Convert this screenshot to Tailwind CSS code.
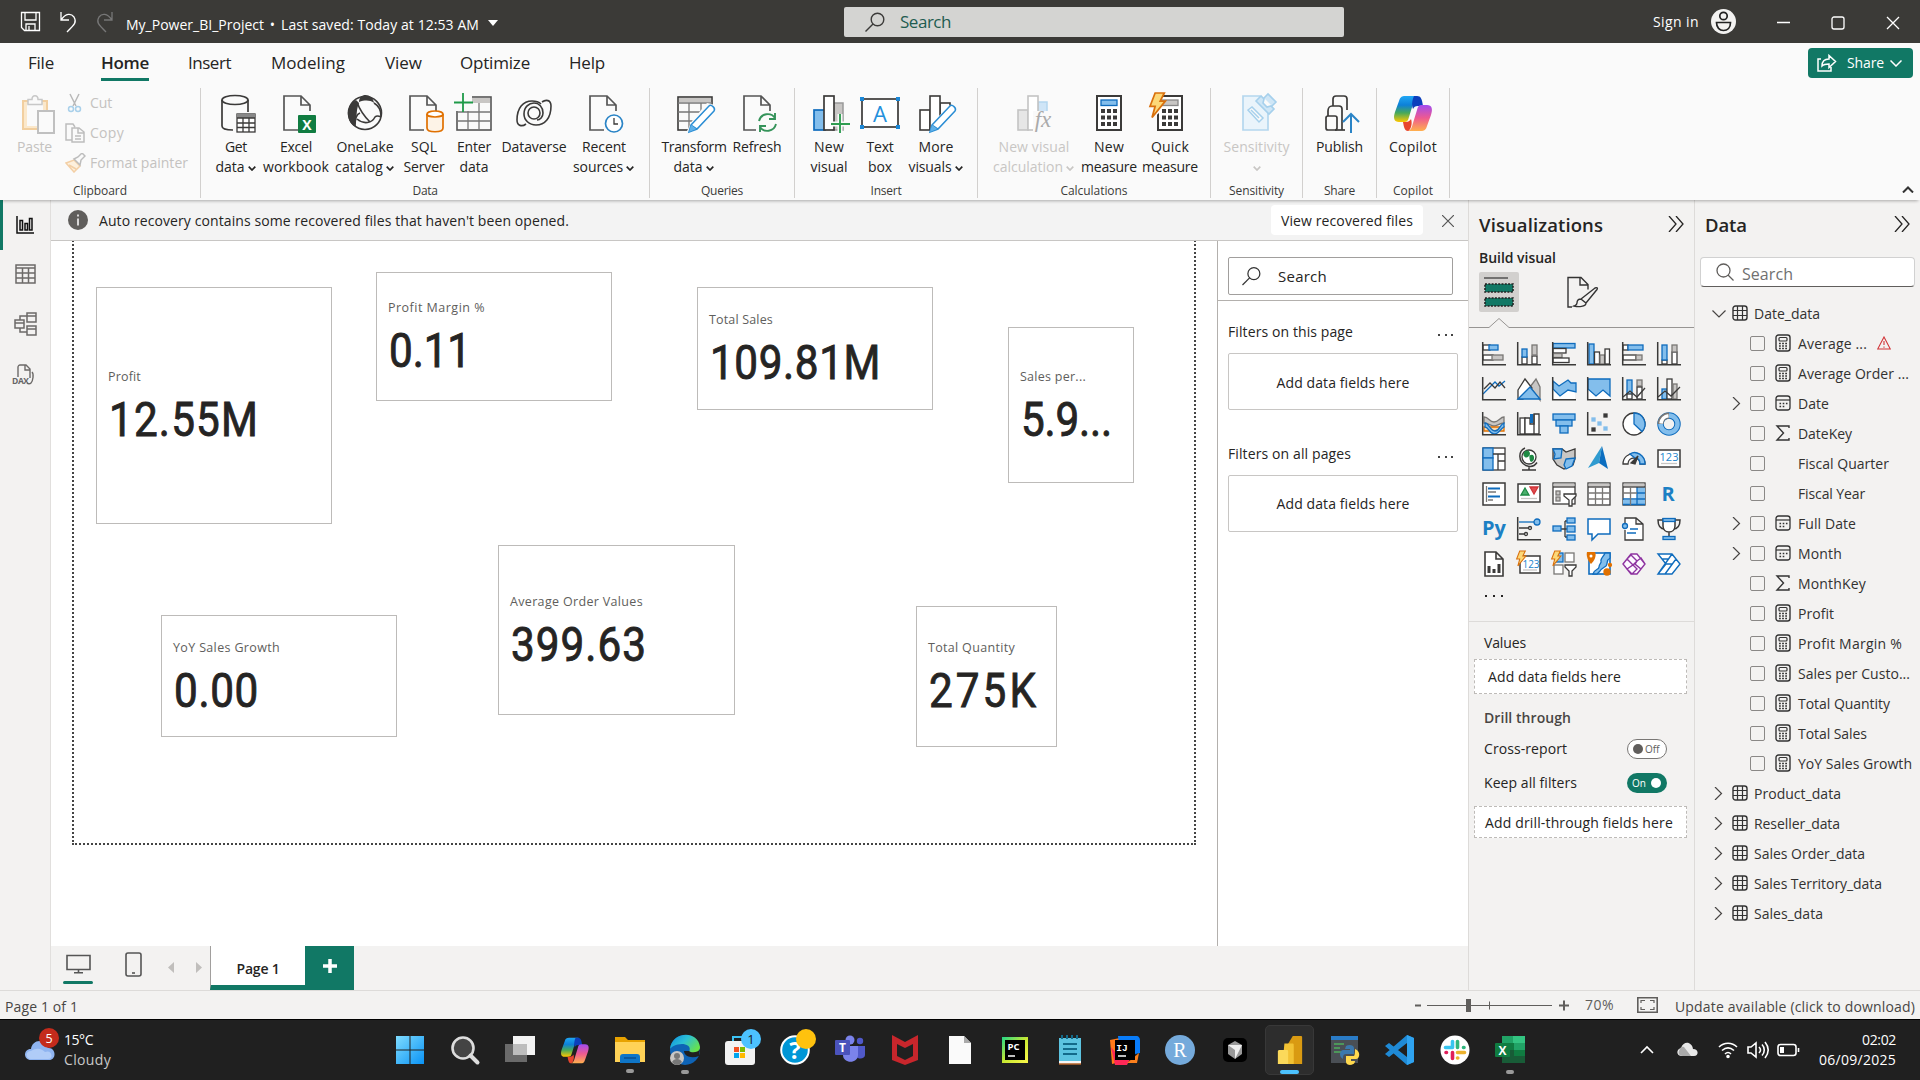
<!DOCTYPE html>
<html lang="en">
<head>
<meta charset="utf-8">
<title>My_Power_BI_Project</title>
<script src="https://cdn.jsdelivr.net/npm/@tailwindcss/browser@4"></script>
</head>
<body class="w-[1920px] h-[1080px] overflow-hidden flex flex-col bg-[#f3f2f1] font-['Open_Sans',sans-serif] text-[14px] leading-[20px] text-[#252423] whitespace-nowrap">

<!-- title bar -->
<header class="h-[43px] shrink-0 bg-[#3b3a37] flex items-center text-white">
  <svg class="ml-[20px] w-[94px] h-[22px] shrink-0" viewBox="0 0 94 22" fill="none" stroke="#fff" stroke-width="1.3">
    <path d="M1.5 1.5h18v18h-15l-3-3zM5 1.500v7.500h11v-7.500M6 19.500v-6.500h9v6.500M9 15v4.500"/>
    <path d="M41 1v8h8M41 9c5-7 10-7 13-3 3 5 1 7-7 15"/>
    <path stroke="#777" d="M92 1v8h-8M92 9c-5-7-10-7-13-3-3 5-1 7 7 15"/>
  </svg>
  <div class="ml-[12px] mt-[6px] w-[373px] flex items-center">
    <span data-w="138">My_Power_BI_Project</span><span class="w-[17px] text-center">•</span><span data-w="198">Last saved: Today at 12:53 AM</span>
    <svg class="ml-[9px] w-[10px] h-[6px] -mt-1 shrink-0" viewBox="0 0 10 6"><path fill="#fff" d="M0 0h10l-5 6z"/></svg>
  </div>
  <div class="ml-[345px] w-[500px] h-[30px] rounded-[2px] bg-[#d4d4d2] flex items-center shrink-0">
    <svg class="ml-[21px] w-[20px] h-[20px]" viewBox="0 0 20 20" fill="none" stroke="#3b3a39" stroke-width="1.4"><circle cx="12.500" cy="7.500" r="6.300"/><path d="M8 12l-7.500 7.500"/></svg>
    <span class="ml-[15px] text-[17px] text-[#1f5c50]" data-w="51">Search</span>
  </div>
  <span class="ml-[309px]" data-w="46">Sign in</span>
  <svg class="ml-[12px] w-[25px] h-[25px] shrink-0" viewBox="0 0 25 25"><circle cx="12.500" cy="12.500" r="12.500" fill="#f3f2f1"/><g fill="none" stroke="#222" stroke-width="1.700"><circle cx="12.500" cy="7" r="3.700"/><path d="M5.500 13.500h14c0 5-3 8-7 8s-7-3-7-8z"/></g></svg>
  <svg class="ml-[40px] mt-[3px] w-[126px] h-[16px] shrink-0" viewBox="0 0 126 16" fill="none" stroke="#fff" stroke-width="1.300"><path d="M1 7.500h13M111 2l12 12M123 2l-12 12"/><rect x="56" y="2" width="12" height="12" rx="2"/></svg>
</header>

<!-- menu tabs -->
<nav class="h-[45px] shrink-0 bg-[#fafafa] flex text-[17px] leading-[39px] relative">
  <span class="ml-[28px] w-[73px]"><span data-w="26">File</span></span>
  <span class="w-[87px] font-semibold"><span data-w="48" class="h-[38px] border-b-[3px] border-[#117865]">Home</span></span>
  <span class="w-[83px]"><span data-w="43">Insert</span></span>
  <span class="w-[114px]"><span data-w="74">Modeling</span></span>
  <span class="w-[75px]"><span data-w="37">View</span></span>
  <span class="w-[109px]"><span data-w="70">Optimize</span></span>
  <span class="w-[60px]"><span data-w="36">Help</span></span>
  <div class="ml-auto mr-[7px] mt-[5px] w-[105px] h-[30px] rounded-[4px] bg-[#117865] flex items-center text-white text-[14px] leading-[20px]">
    <svg class="ml-[9px] w-[20px] h-[18px]" viewBox="0 0 20 18" fill="none" stroke="#fff" stroke-width="1.500"><path d="M4 5H1v12h13v-4M5 12c0-5 3-7 7-7V1.500l6.500 6-6.500 6V10c-3 0-5 0-7 2z"/></svg>
    <span class="ml-[10px]" data-w="37">Share</span>
    <svg class="ml-[6px] w-[12px] h-[7px]" viewBox="0 0 12 7" fill="none" stroke="#fff" stroke-width="1.500"><path d="M.5.5L6 6l5.500-5.500"/></svg>
  </div>
</nav>

<!-- ribbon -->
<section class="h-[112px] shrink-0 bg-[#fafafa] flex relative z-10 shadow-[0_3px_3px_-2px_rgba(0,0,0,0.3)]">
  <div class="w-[201px] h-[110px] border-r border-[#d2d0ce] flex flex-col">
    <div class="flex h-[94px] shrink-0 text-[#c4c2c0]">
      <div class="w-[65px] flex flex-col">
        <svg class="ml-[20px] mt-[6px] w-[38px] h-[40px]" viewBox="0 0 38 40"><path d="M3 7h24v28H3z" fill="#fbe8cb" stroke="#f2cf9f" stroke-width="2"/><path d="M7 10h16v22H7z" fill="#fafafa"/><path d="M8 5.500h4c0-5 6-5 6 0h4v5H8z" fill="#fafafa" stroke="#c8c8c8" stroke-width="1.500"/><path d="M18 17h16v22H18z" fill="#fafafa" stroke="#c0c0c0" stroke-width="2"/></svg>
        <span class="ml-[17px] mt-[3px]"><span data-w="35">Paste</span></span>
      </div>
      <div class="flex flex-col">
        <div class="flex h-[30px] items-center"><svg class="w-[20px] h-[20px]" viewBox="0 0 20 20" fill="none" stroke-width="1.500"><path d="M5 1l6 12M14 1L8 13" stroke="#b9b9b9"/><circle cx="6" cy="16" r="2.500" stroke="#a9d0ea"/><circle cx="13" cy="16" r="2.500" stroke="#a9d0ea"/></svg><span class="ml-[5px]" data-w="22">Cut</span></div>
        <div class="flex h-[30px] items-center"><svg class="w-[20px] h-[20px]" viewBox="0 0 20 20" fill="none" stroke="#bdbdbd" stroke-width="1.500"><path d="M7 17H1V1h7l2 3M7 5h7l5 4v10H7zM13 5v5h6M10 13h6M10 16h6"/></svg><span class="ml-[5px]" data-w="34">Copy</span></div>
        <div class="flex h-[30px] items-center"><svg class="w-[21px] h-[20px]" viewBox="0 0 21 20" fill="none" stroke-width="1.500"><path d="M1 10l8-3 6 6-6 6zM4 12l7 4" stroke="#f3cfa5" fill="#fdf0dd"/><path d="M9 6l4-2 4-4 3 3-4 4-1 5z" stroke="#bdbdbd" fill="#fafafa"/></svg><span class="ml-[4px]" data-w="98">Format painter</span></div>
      </div>
    </div>
    <span class="text-center text-[12px] leading-[18px] text-[#3b3a39]"><span data-w="54">Clipboard</span></span>
  </div>
  <div id="ribbon" class="flex"></div>
  <svg class="ml-auto mr-[6px] mt-[98px] w-[12px] h-[7px]" viewBox="0 0 12 7" fill="none" stroke="#333" stroke-width="2"><path d="M1 6.500l5-5 5 5"/></svg>
</section>

<main class="flex h-[790px] shrink-0">
  <!-- view switcher -->
  <aside class="w-[51px] border-r border-[#e1dfdd] flex flex-col">
    <div class="h-[50px] border-l-[3px] border-[#117865] flex items-center"><svg class="ml-[13px] w-[18px] h-[18px]" viewBox="0 0 18 18" fill="none" stroke="#111" stroke-width="1.500"><path d="M1 0v17h17M4 4.500h2.500v9.500H4zM9 7.500h2.500v6.500H9zM13.500 2.500H16v11.500h-2.500z"/></svg></div>
    <div class="h-[48px] flex items-center"><svg class="ml-[15px] w-[21px] h-[20px]" viewBox="0 0 21 20" fill="none" stroke="#6c6a68" stroke-width="1.500"><path d="M1 1h19v18H1zM1 4h19M1 9h19M1 14h19M7.500 4v15M13.500 4v15"/></svg></div>
    <div class="h-[52px] flex items-center"><svg class="ml-[14px] w-[23px] h-[24px]" viewBox="0 0 23 24" fill="none" stroke="#6c6a68" stroke-width="1.500"><path d="M1 8h9v8H1zM1 11h9M13 1h9v9h-9zM13 4h9M13 14h9v9h-9zM13 17h9M6 8V4h7M6 16v4h7"/></svg></div>
    <div class="h-[50px] flex items-center"><svg class="ml-[12px] w-[24px] h-[22px]" viewBox="0 0 24 22" fill="none" stroke="#6c6a68" stroke-width="1.400"><path d="M6 13V3c0-1 1-2 2-2h6l4 4v9M13 1v5h5M20 8c2 2 1 9-1 11-1 1-3 1-4 0"/><text x="0" y="20" font-size="8.500" font-weight="700" fill="#666" stroke="none" textLength="17">DAX</text></svg></div>
  </aside>

  <div class="w-[1417px] flex flex-col">
    <!-- recovery notice -->
    <div class="h-[41px] shrink-0 bg-[#f3f3f3] border-b border-[#c8c6c4] flex items-center">
      <svg class="ml-[17px] w-[20px] h-[20px]" viewBox="0 0 20 20"><circle cx="10" cy="10" r="10" fill="#605e5c"/><path d="M10 4.500v2M10 8.500v7" stroke="#fff" stroke-width="1.500"/></svg>
      <span class="ml-[11px] mt-px" data-w="470">Auto recovery contains some recovered files that haven't been opened.</span>
      <span class="ml-auto w-[152px] h-[30px] leading-[31px] rounded-[4px] bg-white text-center"><span data-w="132">View recovered files</span></span>
      <svg class="ml-[19px] mr-[14px] w-[12px] h-[12px] mt-[2px]" viewBox="0 0 12 12" stroke="#555" stroke-width="1.200"><path d="M0 0l12 12M12 0L0 12"/></svg>
    </div>
    <div class="flex h-[705px] bg-white">
      <!-- report canvas -->
      <div id="canvas" class="relative w-[1166px] overflow-hidden">
        <div class="absolute left-[21px] -top-[4px] w-[1124px] h-[608px] border-2 border-dotted border-[#444]"></div>
      </div>
      <!-- filters -->
      <div class="w-[251px] border-l border-[#b3b0ad] flex flex-col">
        <div class="h-[60px] border-b border-[#b3b0ad] pt-[16px] pl-[10px]">
          <div class="w-[225px] h-[38px] border border-[#a19f9d] rounded-[2px] flex items-center">
            <svg class="ml-[13px] w-[19px] h-[20px]" viewBox="0 0 20 20" fill="none" stroke="#333" stroke-width="1.300"><circle cx="12.500" cy="7.500" r="6.300"/><path d="M8 12L.5 19.500"/></svg>
            <span class="ml-[17px] text-[15px]" data-w="49">Search</span>
          </div>
        </div>
        <div class="ml-[10px] mt-[21px] w-[230px] flex justify-between items-center"><span data-w="125">Filters on this page</span><svg class="mr-[4px] mt-[5px] w-[16px] h-[2px]" viewBox="0 0 16 2" fill="#444"><path d="M0 0h2v2H0zM7 0h2v2H7zM13 0h2v2h-2z"/></svg></div>
        <div class="ml-[10px] mt-[11px] w-[230px] h-[57px] border border-[#c8c6c4] rounded-[2px] flex items-center justify-center pt-[3px]"><span data-w="133">Add data fields here</span></div>
        <div class="ml-[10px] mt-[34px] w-[230px] flex justify-between items-center"><span data-w="123">Filters on all pages</span><svg class="mr-[4px] mt-[5px] w-[16px] h-[2px]" viewBox="0 0 16 2" fill="#444"><path d="M0 0h2v2H0zM7 0h2v2H7zM13 0h2v2h-2z"/></svg></div>
        <div class="ml-[10px] mt-[11px] w-[230px] h-[57px] border border-[#c8c6c4] rounded-[2px] flex items-center justify-center"><span data-w="133">Add data fields here</span></div>
      </div>
    </div>
    <!-- page tabs -->
    <div class="h-[44px] flex">
      <div class="ml-[12px] w-[30px] flex flex-col items-center">
        <svg class="mt-[8px] w-[25px] h-[20px]" viewBox="0 0 25 20" fill="none" stroke="#555" stroke-width="1.600"><path d="M1 1.500h23v14H1zM12.500 15.500v3M8 18.700h9"/></svg>
        <div class="mt-[7px] w-[30px] h-[3px] rounded bg-[#117865]"></div>
      </div>
      <svg class="ml-[32px] mt-[6px] w-[17px] h-[25px]" viewBox="0 0 17 25" fill="none" stroke="#555" stroke-width="1.600"><rect x="1" y="1" width="15" height="23" rx="2"/><path d="M7 21h3"/></svg>
      <svg class="ml-[26px] mt-[16px] w-[34px] h-[11px]" viewBox="0 0 34 11" fill="#c0bebc"><path d="M6 0v11L0 5.500zM28 0v11l6-5.500z"/></svg>
      <div class="ml-[8px] w-[95px] bg-white border-l border-[#a19f9d] border-b-[5px] border-b-[#117865] text-center font-semibold leading-[46px]"><span data-w="43">Page 1</span></div>
      <div class="w-[49px] bg-[#117865] flex justify-center pt-[13px]"><svg class="w-[14px] h-[14px]" viewBox="0 0 14 14" stroke="#fff" stroke-width="3.500"><path d="M7 0v14M0 7h14"/></svg></div>
    </div>
  </div>

  <!-- visualizations -->
  <section class="w-[226px] border-l border-[#dddbd9] flex flex-col">
    <div class="h-[46px] pl-[10px] pr-[10px] pt-[2px] flex items-center justify-between font-semibold text-[18.5px]"><span class="mt-[2px]" data-w="124">Visualizations</span><svg class="w-[16px] h-[16px]" viewBox="0 0 16 16" fill="none" stroke="#252423" stroke-width="1.300"><path d="M1 0l7 8-7 8M8 0l7 8-7 8"/></svg></div>
    <span class="ml-[10px] h-[22px] pt-[2px] font-semibold"><span data-w="77">Build visual</span></span>
    <div class="flex mt-[4px] ml-[10px]">
      <div class="w-[40px] h-[40px] bg-[#d2d0ce] rounded-[2px]"><svg class="w-[40px] h-[40px]" viewBox="0 0 40 40"><path d="M5 6h24" stroke="#333" stroke-width="1.200"/><path d="M6 12h28v8H6zM6 26h28v8H6z" fill="#117865" stroke="#222" stroke-width="1.600" stroke-dasharray="2 1.300"/></svg></div>
      <svg class="ml-[47px] mt-[4px] w-[33px] h-[32px]" viewBox="0 0 33 32" fill="none" stroke="#333" stroke-width="1.400"><path d="M6 31H2V1.500h13l7 7v5M14 2v7h8M15 23L29 12c2-1 3 0 2 1.500L20 27zM15 23c-3 0-4 2-4 4s-1 2-3 3c4 1 12 1 12-3"/></svg>
    </div>
    <svg class="mt-[5px] w-[225px] h-[12px] shrink-0" viewBox="0 0 225 12" fill="none" stroke="#979593"><path d="M0 10.500h20l10-9 10 9h185"/></svg>
    <div id="visuals" class="ml-[13px] mt-[13px] grid grid-cols-6 w-[210px] h-[245px]"></div>
    <div class="ml-[16px] mt-[9px] h-[25px]"><svg class="w-[20px] h-[4px] -mt-px" viewBox="0 0 20 4" fill="#252423"><path d="M0 0h2v2H0zM8 0h2v2H8zM16 0h2v2h-2z"/></svg></div>
    <div class="border-t border-[#dddbd9] flex flex-col pt-[11px]">
      <span class="ml-[15px]"><span data-w="42">Values</span></span>
      <div class="ml-[5px] mt-[6px] w-[213px] h-[35px] bg-white border border-dashed border-[#bebbb8] pl-[13px] leading-[33px]"><span data-w="133">Add data fields here</span></div>
      <span class="ml-[15px] mt-[14px] font-semibold text-[#484644]"><span data-w="87">Drill through</span></span>
      <div class="ml-[15px] mt-[11px] w-[183px] flex justify-between items-center"><span data-w="83">Cross-report</span><span class="w-[40px] h-[20px] rounded-full bg-white border border-[#797775] flex items-center text-[10px] text-[#605e5c]"><i class="ml-[5px] mr-[2px] w-[10px] h-[10px] rounded-full bg-[#605e5c]"></i>Off</span></div>
      <div class="ml-[15px] mt-[14px] w-[183px] flex justify-between items-center"><span data-w="93">Keep all filters</span><span class="w-[40px] h-[20px] rounded-full bg-[#117865] flex items-center text-[10px] text-white pl-[5px]">On<i class="ml-[5px] w-[10px] h-[10px] rounded-full bg-white"></i></span></div>
      <div class="ml-[5px] mt-[13px] w-[213px] h-[32px] bg-white border border-dashed border-[#bebbb8] pl-[10px] leading-[32px]"><span data-w="188">Add drill-through fields here</span></div>
    </div>
  </section>

  <!-- data -->
  <section class="w-[226px] border-l border-[#dddbd9] flex flex-col">
    <div class="h-[46px] pl-[10px] pr-[10px] pt-[2px] flex items-center justify-between font-semibold text-[18.5px]"><span class="mt-[2px]" data-w="42">Data</span><svg class="w-[16px] h-[16px]" viewBox="0 0 16 16" fill="none" stroke="#252423" stroke-width="1.300"><path d="M1 0l7 8-7 8M8 0l7 8-7 8"/></svg></div>
    <div class="ml-[5px] mt-[11px] mb-[11px] w-[215px] h-[30px] shrink-0 bg-white border border-[#d1d1d1] border-b-[#605e5c] rounded-[4px] flex items-center">
      <svg class="ml-[15px] w-[18px] h-[18px]" viewBox="0 0 18 18" fill="none" stroke="#605e5c" stroke-width="1.300"><circle cx="7.500" cy="7.500" r="6.500"/><path d="M12 12l5.500 5.500"/></svg>
      <span class="ml-[8px] mt-[3px] text-[16px] text-[#707070]" data-w="51">Search</span>
    </div>
    <div id="fields" class="flex flex-col text-[#323130]"></div>
  </section>
</main>

<!-- status bar -->
<footer class="h-[29px] shrink-0 border-t border-[#dddbd9] flex items-center text-[#484644]">
  <span class="ml-[5px] mt-[4px]" data-w="73">Page 1 of 1</span>
  <svg class="ml-[1337px] w-[156px] h-[16px] shrink-0" viewBox="0 0 156 16" stroke="#605e5c"><path d="M0 8.500h6M144 8.500h10M149 3.500v10" stroke-width="2"/><path d="M12 8.500h125M74.500 4.500v8"/><path d="M53.500 2v13" stroke-width="5"/></svg>
  <span class="ml-[14px] text-[#605e5c]" data-w="29">70%</span>
  <svg class="ml-[23px] w-[21px] h-[16px] shrink-0" viewBox="0 0 21 16" fill="none" stroke="#605e5c"><path d="M.8.8h19.400v14.400H.8z" stroke-width="1.600"/><path d="M4 6V3.500h4M13 3.500h4V6M17 10v2.500h-4M8 12.500H4V10" stroke-width="1.200"/></svg>
  <span class="ml-[17px] mt-[4px]" data-w="240">Update available (click to download)</span>
</footer>

<!-- taskbar -->
<footer class="h-[61px] shrink-0 bg-[#202020] border-t border-black flex items-center text-white text-[14px]">
  <svg class="ml-[24px] w-[36px] h-[38px] -mt-[10px] shrink-0" viewBox="0 0 36 38"><path d="M7 34c-8 0-8-11 0-11 1-9 13-12 17-1 8-1 9 12 1 12z" fill="#8fb4f0"/><path d="M7 33c-6 0-6-8 0-8 6-4 11-2 14 1 7-3 9 7 3 7z" fill="#b0ccf8"/><circle cx="25" cy="12" r="10" fill="#c42b1c"/><text x="25" y="16.500" font-size="12.500" text-anchor="middle" fill="#fff">5</text></svg>
  <div class="ml-[4px] w-[318px] shrink-0 flex flex-col leading-[20px]"><span><span data-w="29">15°C</span></span><span class="text-[#c8c8c8]"><span data-w="47">Cloudy</span></span></div>
  <div id="apps" class="flex shrink-0"></div>
  <svg class="ml-[103px] w-[160px] h-[24px] shrink-0" viewBox="0 0 160 24" fill="none" stroke="#fff" stroke-width="1.600"><path d="M1 15l6-6 6 6"/><path d="M42 18c-6 0-6-7-1-8 3-8 11-6 12 1 6 0 6 7 1 7z" fill="#e8e8e8" stroke="none"/><path d="M39 13c1-4 3-5 5-4l7 9h-8c-4 0-5-3-4-5z" fill="#aaa" stroke="none"/><path d="M79 9c5-5 13-5 18 0M82 12.500c4-3.500 8-3.500 12 0M85 16c2-2 4-2 6 0"/><circle cx="88" cy="18.500" r="1" fill="#fff"/><path d="M108 9h3l5-4v14l-5-4h-3zM119 9c2 2 2 4 0 6M122 6.500c3 3 3 8 0 11M125 4c4 5 4 11 0 16"/><rect x="138" y="6.500" width="18" height="11" rx="2.500"/><path d="M140 9h4v6h-4z" fill="#fff" stroke="none"/><path d="M158.500 10v4"/></svg>
  <div class="ml-auto mr-[24px] flex flex-col items-end leading-[20px]"><span><span data-w="34">02:02</span></span><span><span data-w="77">06/09/2025</span></span></div>
</footer>

<script>
const K = '#3b3a39', B = '#0f6cbd', L = '#83beec', G = '#c8c6c4', GS = '#797775', O = '#e07000';
const rect = (x, y, w, h, f, s, sw) => `<rect x="${x}" y="${y}" width="${w}" height="${h}" fill="${f || 'none'}" stroke="${s || K}" stroke-width="${sw || 1.3}"/>`;
const path = (d, s, f, sw) => `<path d="${d}" stroke="${s || K}" fill="${f || 'none'}" stroke-width="${sw || 1.3}"/>`;
const circ = (x, y, r, s, f, sw) => `<circle cx="${x}" cy="${y}" r="${r}" fill="${f || 'none'}" stroke="${s || K}" stroke-width="${sw || 1.3}"/>`;
const txt = (x, y, size, fill, t, extra) => `<text x="${x}" y="${y}" font-size="${size}" fill="${fill}" text-anchor="middle" stroke="none" ${extra || ''}>${t}</text>`;
const svg = (cls, w, h, body) => `<svg class="${cls}" viewBox="0 0 ${w} ${h}" fill="none">${body}</svg>`;
const bolt = (x, y, s) => `<g transform="translate(${x} ${y}) scale(${s})"><path d="M6 0h9l-4 8h5L3 24l3-11H1z" fill="#fcd878" stroke="#d9700c" stroke-width="1.700"/></g>`;
const pencil = `<path d="M14 31L32 12c2-2 7 2 5 5L20 35l-8 3zM14 31l6 4" fill="#fff" stroke="#2a8dd4" stroke-width="1.500"/><path d="M12 38l2-7 5 4z" fill="#5fb0e8"/>`;
const page = x => path(`M${x + 27} 18v-6l-9-9H${x + 1}v34h14M${x + 18} 3v9h9`, '#555', 'none', 1.7);
const copilot = n => `<defs><linearGradient id="${n}a" x1="0" y1="0" x2="0" y2="1"><stop offset="0" stop-color="#20a7f5"/><stop offset=".35" stop-color="#0d80d8"/><stop offset=".65" stop-color="#47a95a"/><stop offset="1" stop-color="#ffc800"/></linearGradient><linearGradient id="${n}b" x1="0" y1="0" x2="0" y2="1"><stop offset="0" stop-color="#a14bf0"/><stop offset=".5" stop-color="#ee5a90"/><stop offset="1" stop-color="#ffb04d"/></linearGradient></defs><path d="M11 1h13c-3 1-4 4-5 8l-4 13c-1 4-2 5-5 5H5c-5 0-6-4-4-10L5 6c1-4 3-5 6-5z" fill="url(#${n}a)"/><path d="M20 1h3c4 0 5 3 6 10h-5c-3 0-4 1-5 3-2-5 0-11 1-13z" fill="#0c3fbc"/><path d="M27 36H14c3-1 4-4 5-8l4-13c1-4 2-5 5-5h5c5 0 6 4 4 10l-4 11c-1 4-3 5-6 5z" fill="url(#${n}b)"/><path d="M9 27h3c2 0 4-1 5-3 2 5-1 12-3 12-3 0-4-3-5-9z" fill="#e8452e"/>`;
const calc = (x, f) => rect(x, 3, 24, 34, '#fff', K, 2) + rect(x + 4, 7, 16, 5.500, f, f === G ? '#888' : B) + [16, 22.500, 29].map(y => [4, 10, 16].map(d => `<path d="M${x + d} ${y}h4v4h-4z" fill="${K}"/>`).join('')).join('');

const I = {
  get: path('M6 7v26c0 3 6 4 11 4M32 19V7', K, 'none', 1.7) + `<ellipse cx="19" cy="7" rx="13" ry="4.500" stroke="${K}" stroke-width="1.700"/>` + rect(21, 21, 18, 18, '#fff') + `<path d="M21 21h18v4H21z" fill="#888"/>` + path('M21 25h18M21 30h18M21 34.500h18M27 25v14M33 25v14'),
  excel: page(7) + `<rect x="22" y="22" width="18" height="18" rx="1" fill="#107c41"/>` + txt(31, 36.500, 14, '#fff', 'X', 'font-weight="700"'),
  lake: circ(20, 20, 16.500, K, '#fafafa', 1.6) + `<path d="M14 9C14-1 28 0 29 10c-4-3-9-3-15-1z" fill="${K}"/><path d="M11 7C0 13 1 27 9 33c4-4 1-14 5-23z" fill="${K}"/>` + path('M10 33c0-8 2-12 5-13M12 9c3 9 8 15 13 20M12 26c7 6 15 4 18-2 2-2 4-1 6 0', K, 'none', 1.6) + path('M29 10c5 3 7 8 7 13', K, 'none', 1.6),
  sql: page(5) + `<path d="M23 21v14c0 5 16 5 16 0V21" fill="#fdf3e7" stroke="${O}" stroke-width="1.700"/><ellipse cx="31" cy="21" rx="8" ry="3" fill="#fff" stroke="${O}" stroke-width="1.700"/>`,
  enter: rect(3, 4, 34, 33, '#fafafa', '#555', 1.6) + `<path d="M13 5h23v5H13z" fill="${G}"/>` + path('M3 19h34M3 28h34M14 10v27M25 10v27', '#777') + `<path d="M0 0h18v18H0z" fill="#fafafa"/>` + path('M9 0v19M0 9.500h19', '#1f9a49', 'none', 1.8),
  dv: circ(20, 20, 6, K, 'none', 1.6) + path('M28 9c4-3 9-2 9 4 0 12-6 19-15 19-7 0-12-5-12-11 0-7 5-11 10-11s9 4 9 10c0 4-3 7-6 7M12 31c-4 3-9 2-9-4C3 15 9 8 18 8c4 0 7 1 9 3', K, 'none', 1.6),
  recent: page(5) + circ(30, 30.500, 8.500, '#2a84c6', '#fff', 1.7) + path('M30 25v6h4', K),
  transform: rect(4, 4, 34, 33, '#fafafa', K, 1.6) + `<path d="M5 5h32v4H5z" fill="${G}"/>` + path('M4 10h34M4 19h34M4 28h34M15 10v27M27 10v27', '#777') + `<path d="M12 40l6-12L33 10l8 2v28z" fill="#fafafa"/>` + `<g transform="translate(3 1)">${pencil}</g>`,
  refresh: page(6) + `<path d="M19 20h20v20H19z" fill="#fafafa"/>` + path('M22 28c2-8 12-9 16-3M38 20v6h-6M39 31c-2 8-12 9-16 3M23 39v-6h6', '#35935a', 'none', 1.9),
  newv: rect(5, 17, 11, 20, L, B, 1.7) + rect(24, 10, 10, 27, G, '#999', 1.5) + rect(15, 3, 10, 34, '#fff', K, 1.7) + path('M31 21v20M22 31h19', '#fafafa', 'none', 5) + path('M31 21v19M22 31h19', '#2f9d51', 'none', 1.9),
  text: rect(2, 6, 36, 28, '#fff', K, 1.7) + [[0, 4], [36, 4], [0, 32], [36, 32]].map(p => `<path d="M${p[0]} ${p[1]}h4v4h-4z" fill="#1b87d6"/>`).join('') + txt(20, 28.500, 22, '#2490dc', 'A'),
  more: rect(4, 17, 10, 20, '#fff', K, 1.6) + rect(24, 10, 10, 27, '#fff', K, 1.6) + rect(14, 3, 10, 34, '#fff', K, 1.6) + `<path d="M13 40l5-12 16-16 6 2v26z" fill="#fafafa"/>` + `<g transform="translate(2 1)">${pencil}</g>`,
  calcv: rect(4, 17, 10, 20, '#e6e6e6', '#c4c4c4', 1.6) + rect(24, 9, 9, 14, '#cfe5f7', '#b4d6ef', 1.5) + rect(14, 3, 10, 34, '#fff', '#c4c4c4', 1.6) + `<path d="M19 18h19v22H19z" fill="#fafafa"/>` + txt(29, 34, 23, '#aaa', 'fx', `font-style="italic" font-family="Liberation Serif"`),
  newm: calc(8, L),
  quick: calc(8, G) + `<path d="M-2 0h14l-3 20-7 6z" fill="#fafafa"/>` + bolt(-1, 0, 1.02),
  sens: path('M31 20v17H6V3h17', '#b4d6ee', '#eaf4fb', 1.7) + path('M11 17l4-3 11 11-4 4zM14 17l8 8', '#a6d0ec', '#fafafa', 1.5) + path('M19 8l5-5 3 3-1 4 4 4 4-1 3 3-5 5zM27 5l4-4 8 8-4 4', '#a6d0ec', '#cfe6f6', 1.6),
  publish: path('M8 23v-5c0-3 2-5 4-5h7c2 0 3 1 3 3v21M13 13V6c0-2 1-3 3-3h8c2 0 3 1 3 3v11', K, 'none', 1.7) + `<rect x="6" y="23" width="11" height="14" rx="2" fill="#fafafa" stroke="${K}" stroke-width="1.700"/>` + path('M15 37h10', K, 'none', 1.7) + path('M31 40V22M23 29l8-8 8 8', '#2a84c6', 'none', 2),
  copilot: `<g transform="translate(1 2)">${copilot('r')}</g>`
};

/* group: label, label width, total width, left pad, buttons [icon, cell width, line 1, w1, line 2, w2, chevron, disabled] */
const groups = [
  ['Data', 25, 449, 5, [['get', 60, 'Get', 22, 'data', 29, 1], ['excel', 60, 'Excel', 32, 'workbook', 66], ['lake', 78, 'OneLake', 57, 'catalog', 48, 1], ['sql', 40, 'SQL', 26, 'Server', 41], ['enter', 60, 'Enter', 34, 'data', 29], ['dv', 60, 'Dataverse', 65, '', 0], ['recent', 80, 'Recent', 44, 'sources', 50, 1]]],
  ['Queries', 42, 145, 4, [['transform', 80, 'Transform', 65, 'data', 29, 1], ['refresh', 46, 'Refresh', 49, '', 0]]],
  ['Insert', 31, 183, 4, [['newv', 60, 'New', 30, 'visual', 37], ['text', 42, 'Text', 27, 'box', 24], ['more', 70, 'More', 35, 'visuals', 43, 1]]],
  ['Calculations', 67, 233, 11, [['calcv', 90, 'New visual', 71, 'calculation', 70, 1, 1], ['newm', 60, 'New', 30, 'measure', 56], ['quick', 62, 'Quick', 38, 'measure', 56]]],
  ['Sensitivity', 55, 92, 0, [['sens', 91, 'Sensitivity', 66, '', 0, 1, 1]]],
  ['Share', 31, 74, 0, [['publish', 73, 'Publish', 47, '', 0]]],
  ['Copilot', 40, 73, 0, [['copilot', 72, 'Copilot', 48, '', 0]]]
];
document.getElementById('ribbon').innerHTML = groups.map(g => `
  <div class="h-[110px] border-r border-[#d2d0ce] flex flex-col" style="width:${g[2]}px">
    <div class="flex h-[94px] shrink-0" style="padding-left:${g[3]}px">${g[4].map(b => `
      <div class="flex flex-col items-center shrink-0 ${b[7] ? 'text-[#c8c6c4]' : ''}" style="width:${b[1]}px">
        ${svg('mt-[5px] w-[40px] h-[40px] overflow-visible shrink-0', 40, 40, I[b[0]])}
        <span class="mt-[4px] flex"><span data-w="${b[3]}">${b[2]}</span></span>
        <span class="flex items-center h-[20px]">${b[4] ? `<span data-w="${b[5]}">${b[4]}</span>` : ''}${b[6] ? svg(`w-[8px] h-[5px] mt-[3px] ${b[4] ? 'ml-[3px] mr-px' : ''}`, 8, 5, '<path d="M.7.7L4 4 7.300.7" stroke="currentColor" stroke-width="1.700"/>') : ''}</span>
      </div>`).join('')}</div>
    <span class="text-center text-[12px] leading-[18px] text-[#3b3a39]"><span data-w="${g[1]}">${g[0]}</span></span>
  </div>`).join('');

/* report cards: left, top, width, height, title, title width, value, value width */
const cards = [
  [96, 287, 236, 237, 'Profit', 33, '12.55M', 150], [376, 272, 236, 129, 'Profit Margin %', 97, '0.11', 82],
  [697, 287, 236, 123, 'Total Sales', 64, '109.81M', 171], [1008, 327, 126, 156, 'Sales per...', 66, '5.9...', 91],
  [161, 615, 236, 122, 'YoY Sales Growth', 107, '0.00', 85], [498, 545, 237, 170, 'Average Order Values', 133, '399.63', 136],
  [916, 606, 141, 141, 'Total Quantity', 87, '275K', 110]];
document.getElementById('canvas').innerHTML += cards.map(c => `
  <div class="absolute bg-white border border-[#bdbbb9] pl-[11px] flex flex-col items-start justify-center" style="left:${c[0] - 51}px;top:${c[1] - 241}px;width:${c[2]}px;height:${c[3]}px">
    <span class="text-[12.5px] leading-[18px] text-[#605e5c] mt-[9px]" data-w="${c[5]}">${c[4]}</span>
    <span class="font-['Roboto',sans-serif] text-[48px] leading-[56px] mt-[6px] mb-[4px] ml-px origin-left [transform:scaleX(0.88)] [-webkit-text-stroke:0.9px_#252423]" data-w="${c[7]}" data-squeeze="0.88">${c[6]}</span>
  </div>`).join('');

const ax = path('M.7 0v22.700H24', K, 'none', 1.5);
const V = [
  rect(1, 3, 7, 5, '#fff') + rect(7, 3, 9, 5, L, B) + rect(1, 13, 10, 5, '#fff') + rect(10, 13, 11, 5, G, GS) + ax,
  rect(5, 15, 5, 7, '#fff') + rect(5, 7, 5, 8, L, B) + rect(15, 14, 5, 8, '#fff') + rect(15, 3, 5, 10, G, GS) + ax,
  rect(1, 1.500, 22, 4.500, L, B) + rect(1, 6.500, 13, 4.500, '#fff') + rect(1, 11.500, 9, 4, G, GS) + rect(1, 16, 16, 4.500, '#fff') + ax,
  rect(2, 2, 5, 20, L, B) + rect(7.500, 10, 5, 12, '#fff') + rect(13, 13, 4.500, 9, G, GS) + rect(18, 7, 4.500, 15, '#fff') + ax,
  rect(1, 3, 5, 5, '#fff') + rect(6, 3, 15, 5, L, B) + rect(1, 13, 13, 5, '#fff') + rect(14, 13, 6, 5, G, GS) + ax,
  rect(5, 18, 5, 4, '#fff') + rect(5, 3, 5, 15, L, B) + rect(15, 10, 5, 12, '#fff') + rect(15, 3, 5, 7, G, GS) + ax,
  path('M1 17L13 5l4 4 6-5', B) + path('M2 12l6-6 5 5 5-6 5 6') + ax,
  path('M13 10l6-8 4 8v13z', GS, G) + path('M1 13L8 2l7 9-9 11H1z', K, '#fff') + path('M1 22l12-12 10 12z', B, L),
  path('M1 5l6 5 7-6 9 4v14H1z', 'none', '#fff') + path('M1 4l6 5 9-6 3 3h5v9l-8-2-8 6-7-7z', B, L) + ax,
  path('M1 12l7 8 8-7 7 6v4H1z', 'none', '#fff') + path('M1 2h22v17l-7-6-7 6-8-7z', B, L) + ax,
  rect(5, 3, 5, 15, L, B) + rect(5, 17, 5, 5, '#fff') + rect(15, 3, 5, 6, G, GS) + rect(15, 10, 5, 12, '#fff') + path('M1 20l7-6 7 6 8-9') + ax,
  rect(5, 12, 5, 10, L, B) + rect(10, 2, 5, 20, '#fff') + rect(16, 7, 4, 15, G, GS) + path('M1 20l7-6 6 5 9-9') + ax,
  path('M2 5c5 0 5 5 10 5s6-5 10-5v6c-5 0-6 3-10 3S7 11 2 11z', GS, G) + path('M2 15h20v4H2z', O, '#fbd9ae') + path('M3 11c4 0 5 8 10 8s4-6 9-8v4c-4 2-5 7-10 7s-5-7-9-7z', B, L) + ax,
  rect(3, 6, 5, 16, '#fff') + path('M8 6h5v6h4V2h5v20H8z', K, '#fff') + path('M17 2v20') + `<path d="M13 2h3v9h-3z" fill="${B}"/>` + ax,
  rect(1, 2, 22, 6, L, B) + rect(4, 8, 16, 6, L, B) + rect(8, 14, 8, 7, L, B),
  ax + rect(5, 6, 3, 3, L, L) + rect(17, 2, 3, 3, K) + rect(11, 10, 3, 3, L, L) + rect(5, 16, 3, 3, K) + rect(17, 15, 3, 3, L, L),
  circ(12, 12, 11, K, '#fff') + path('M12 1a11 11 0 0 1 8 18.500L12 12z', B, L),
  circ(12, 12, 8.500, B, 'none', 6.5) + circ(12, 12, 8.500, L, 'none', 4.5) + `<path d="M3.500 12A8.500 8.500 0 0 1 12 3.500" stroke="${GS}" stroke-width="6"/><path d="M4 11.500A8.500 8.500 0 0 1 11.500 3.800" stroke="#fff" stroke-width="3.600"/>`,
  rect(1, 1, 22, 22, '#fff') + rect(1, 1, 10, 10, L, B) + rect(1, 11, 10, 12, L, B) + path('M11 7h12M16 7v16M16 14h7'),
  circ(12, 10, 7, K, '#fff') + path('M8 5c3-2 5 0 4 3-2 3-4 2-5 0zM13 9c3-2 4 1 3 4-2 3-3 0-3-4z', '#1e8a44', '#1e8a44') + path('M8 1C1 4 1 15 9 18.500c5 2 9 0 11-3M12 19v4M5 23h14', K, 'none', 1.5),
  path('M1 2h9l4 3 9-3v10l-2 6-9 4-7-4-4-6z', K, G) + path('M1 2h9l-1 9-7 1 1-5zM14 12l9-1-3 8-6 3-2-4z', B, L),
  `<path d="M15-1L1 21l11-5z" fill="#2f9bd0"/><path d="M15-1l-3 17 9 6z" fill="#0b6ec0"/>`,
  path('M1 17c0-14 22-14 22 0h-5c0-8-12-8-12 0z', K, '#fff') + path('M8 7c6-4 15 1 15 10h-5c0-5-3-6-5-6z', B, L) + path('M9 16l7-7-3 8z', K, K),
  rect(1, 3, 22, 17, '#fff', K, 1.5) + txt(12, 14, 11, '#2385cc', '123') + path('M4 16.500h16', G),
  rect(1, 1, 22, 22, '#fff', K, 1.5) + path('M4.500 4v16', GS) + path('M6 6.500h12M6 14.500h12', B, 'none', 2) + path('M6 10h8M6 18h5', GS),
  rect(1, 2, 22, 18, '#fff', K, 1.5) + path('M4 13l4-7 4 7z', '#1e8a44', '#4bb06d') + path('M13 5h8l-4 7z', '#d13438', '#e04b4f') + path('M4 16.500h16', G),
  rect(1, 1, 22, 21, '#fff') + `<path d="M1.500 1.500h21v3h-21z" fill="${G}"/>` + path('M1 5h22') + rect(4, 9, 4, 4, G, GS) + rect(4, 15, 4, 4, G, GS) + path('M12 12h12v2l-4 4v6h-3v-6l-5-4z', K, '#fff'),
  rect(1, 1, 22, 22, '#fff') + `<path d="M1.500 1.500h21v3h-21z" fill="${G}"/>` + path('M1 5h22') + path('M1 11h22M1 17h22M8.500 5v18M15.500 5v18', GS),
  rect(1, 1, 22, 22, '#fff') + `<path d="M1.500 1.500h21v3h-21z" fill="${G}"/><path d="M15 5h8v18H1v-5h14z" fill="${L}"/>` + path('M15 5v18M1 17h22M1 22.500h22M15 11h8', B) + path('M1 5h22') + path('M1 11h14M8.500 5v18', GS),
  txt(11, 19, 20, '#1c80c4', 'R', 'font-weight="700"'),
  txt(12, 18, 20, '#1c80c4', 'Py', 'font-weight="700"'),
  path('M2 5h15', B) + path('M2 11h10M2 17h6') + circ(20, 5, 3, B, L) + circ(13, 11, 1.500) + circ(9, 17, 1.500) + ax,
  path('M9 12h4M13 4v16M13 4h3M13 12h3M13 20h3') + rect(1, 9, 8, 5, L, B) + rect(15, 1, 8, 5, L, B) + rect(15, 9, 8, 6, L, B) + rect(15, 18, 8, 5, L, B),
  path('M1 2h22v15H11l-6 6v-6H1z', B, '#fff', 1.5),
  path('M3 7V1h11l7 6v16H3V13M14 1v6h7', K, '#fff') + circ(3, 9, 2.500, B, L) + path('M8 12h8M5 16h9', B),
  path('M6 3H1c0 7 3 9 7 9M18 3h5c0 7-3 9-7 9', K, 'none', 1.5) + path('M6 2h12v7c0 8-12 8-12 0zM12 15v5', K, '#fff', 1.5) + rect(6, 1.500, 12, 3, L, B) + rect(6, 19.500, 12, 3, L, B),
  path('M3 0h11l7 7v17H3zM14 0v7h7', K, '#fff', 1.6) + path('M7 14v7M12 17v4M17 12v9', K, 'none', 3),
  rect(3, 4, 20, 17, '#fff', K, 1.5) + txt(14, 15.500, 10, '#2385cc', '123') + path('M6 18h14', G) + bolt(-1, -1, .62),
  rect(3, 1, 8, 9, L, B) + rect(13, 1, 9, 9, '#fff', GS) + rect(2, 13, 9, 9, '#fff', GS) + path('M13 13h11v2l-4 4v5h-3v-5l-4-4z', K, '#fff') + bolt(-1, -1, .62),
  rect(2, 1, 21, 21, '#fff', B, 1.6) + path('M18 1h5v5c-4 2-2 6-4 8-3 2-5 3-6 5l-3 3H6c1-5 6-4 6-7s3-4 2-6 3-5 4-8z', B, L) + `<path d="M0 0h8c2 4-1 9-4 12C1 9-1 4 0 0z" fill="${O}"/><circle cx="4" cy="4" r="1.500" fill="#fff"/>` + circ(20, 20, 3, O, O) + circ(23, 13, 1.500, O, O),
  path('M1 12L9 2h6l8 10-8 10H9zM5 7l4-4 6 6-4 4zM15 9l4-3 4 6-4 5-6-5zM11 13l4 4-5 5-5-5z', '#8e33a0', '#fdf8ff', 1.4),
  path('M1 2h14l8 10-8 10H1l8-10zM1 22L15 2M8 22L19 7M5 7h6M9 12h6', '#0f6cbd', '#fff', 1.4)
];
document.getElementById('visuals').innerHTML = V.map(v => svg('w-[24px] h-[24px] overflow-visible', 24, 24, v)).join('');

const table = svg('w-[16px] h-[16px] ml-[6px]', 16, 16, '<rect x="1" y="1" width="14" height="14" rx="2.500" stroke="#333" stroke-width="1.400"/><path d="M5.500 1v14M10.500 1v14M1 5.500h14M1 10.500h14" stroke="#333" stroke-width="1.200"/>');
const kinds = {
  m: '<rect x="1" y="1" width="14" height="16" rx="2.500" stroke="#333" stroke-width="1.400"/><rect x="4" y="3.500" width="8" height="3.500" rx="1" stroke="#333" stroke-width="1.200"/><path d="M4 9.500h8M4 12h8M4 14.500h8" stroke="#333" stroke-width="1.600" stroke-dasharray="1.800 1.300"/>',
  d: '<rect x="1" y="2" width="14" height="14" rx="2.500" stroke="#333" stroke-width="1.300"/><path d="M1 6h14" stroke="#333" stroke-width="1.200"/><path d="M4.500 9.500h8M4.500 12.500h6" stroke="#333" stroke-width="1.600" stroke-dasharray="1.600 1.600"/>',
  s: '<path d="M14 4V2H2l6.500 7L2 16h12v-2" stroke="#333" stroke-width="1.400"/>', n: ''
};
const fields = [['t', 'Date_data', 66, 'open'], ['m', 'Average ...', 69, '', 1], ['m', 'Average Order ...', 111], ['d', 'Date', 31, 'c'], ['s', 'DateKey', 54], ['n', 'Fiscal Quarter', 91], ['n', 'Fiscal Year', 67], ['d', 'Full Date', 58, 'c'], ['d', 'Month', 44, 'c'], ['s', 'MonthKey', 68], ['m', 'Profit', 36], ['m', 'Profit Margin %', 104], ['m', 'Sales per Custo...', 112], ['m', 'Total Quantity', 92], ['m', 'Total Sales', 69], ['m', 'YoY Sales Growth', 114], ['t', 'Product_data', 87], ['t', 'Reseller_data', 86], ['t', 'Sales Order_data', 111], ['t', 'Sales Territory_data', 128], ['t', 'Sales_data', 69]];
const chev = '<path d="M3 0l6.500 6.500L3 13" stroke="#484644" stroke-width="1.200"/>';
document.getElementById('fields').innerHTML = fields.map(f => f[0] === 't'
  ? `<div class="flex items-center h-[30px] pl-[17px]">${svg('w-[14px] h-[13px]', 14, 13, f[3] ? '<path d="M.5 3.500L7 10l6.500-6.500" stroke="#484644" stroke-width="1.200"/>' : chev)}${table}<span class="ml-[6px] mt-px" data-w="${f[2]}">${f[1]}</span></div>`
  : `<div class="flex items-center h-[30px] pl-[35px]">${svg('w-[12px] h-[13px]', 12, 13, f[3] ? chev : '')}<span class="ml-[8px] w-[15px] h-[15px] border border-[#8a8886] rounded-[2px] shrink-0"></span>${svg('w-[16px] h-[18px] ml-[10px] shrink-0', 16, 18, kinds[f[0]])}<span class="ml-[7px] mt-px" data-w="${f[2]}">${f[1]}</span>${f[4] ? svg('ml-[10px] w-[14px] h-[14px]', 14, 14, '<path d="M7 1L.7 13h12.600zM7 5v4M7 10.500v1.200" stroke="#d13438" stroke-width="1.100"/>') : ''}</div>`).join('');

const apps = [
  '<defs><linearGradient id="w" x2="1" y2="1"><stop stop-color="#7fdcff"/><stop offset="1" stop-color="#0a93f5"/></linearGradient></defs><path d="M1 1h13.500v13.500H1zM15.500 1H29v13.500H15.500zM1 15.500h13.500V29H1zM15.500 15.500H29V29H15.500z" fill="url(#w)"/>',
  '<circle cx="13" cy="13" r="10.500" fill="#444" stroke="#ddd" stroke-width="2.600"/><path d="M20.500 20.500l7 7" stroke="#ddd" stroke-width="4" stroke-linecap="round"/>',
  '<path d="M0 9h22v18H0z" fill="#6a6a6a"/><path d="M8 1h22v19H8z" fill="#f3f3f3"/><path d="M8 9h14v11H8z" fill="#bdbdbd"/>',
  `<g transform="translate(1 2) scale(.73)">${copilot('t')}</g>`,
  '<path d="M0 2h10l3 3h17v22H0z" fill="#e8a200"/><path d="M0 7h30v20H0z" fill="#ffd257"/><path d="M5 28v-6c0-2 1-3 3-3h14c2 0 3 1 3 3v6z" fill="#0f76c8"/><path d="M9 23h12" stroke="#0a4f90" stroke-width="1.500"/><rect x="11" y="34" width="8" height="4" rx="2" fill="#999"/>',
  '<defs><linearGradient id="e" x2="1" y2=".6"><stop stop-color="#0c8bdc"/><stop offset=".5" stop-color="#2cc0d6"/><stop offset="1" stop-color="#68e34a"/></linearGradient></defs><circle cx="15" cy="15" r="15" fill="#0e63b5"/><path d="M0 14C2-4 28-5 30 12c0 7-9 8-11 5 3-6-3-8-7-8C6 9 1 12 0 14z" fill="url(#e)"/><path d="M14 16c0 5 7 8 15 5l1-7c-2 4-9 4-11 2z" fill="#202020"/><circle cx="7" cy="23" r="7" fill="#c8c6c4"/><circle cx="7" cy="21" r="3" fill="#777"/><path d="M2 27c2-4 8-4 10 0-3 4-7 4-10 0z" fill="#777"/><rect x="11" y="35" width="8" height="4" rx="2" fill="#999"/>',
  '<path d="M8 7V2h13v5" stroke="#3cc3f5" stroke-width="2"/><rect y="6" width="30" height="24" rx="3" fill="#f2f2f2"/><path d="M9 12h5v5H9z" fill="#f25022"/><path d="M15 12h5v5h-5z" fill="#7fba00"/><path d="M9 18h5v5H9z" fill="#00a4ef"/><path d="M15 18h5v5h-5z" fill="#ffb900"/><circle cx="26" cy="4" r="10" fill="#4cc2ff"/>' + txt(26, 9, 13, '#1a1a1a', '1'),
  '<circle cx="15" cy="15" r="13.800" fill="#0096d6" stroke="#fff" stroke-width="2"/>' + txt(15, 24, 24, '#fff', '?', 'font-weight="700"') + '<circle cx="26" cy="4" r="10" fill="#ffc20e"/>',
  '<circle cx="15" cy="5" r="4.500" fill="#7b83eb"/><circle cx="25" cy="6" r="3.200" fill="#5059c9"/><path d="M21 11h9v9c0 4-7 5-9 1z" fill="#5059c9"/><path d="M8 11h15v9c0 9-15 9-15 0z" fill="#7b83eb"/><rect y="5" width="15" height="15" rx="1" fill="#4b53bc"/>' + txt(7.5, 17, 12, '#fff', 'T', 'font-weight="700"'),
  '<path d="M2 0l13 7 13-7v25l-13 5-13-5zM7 9v12l8 4 8-4V9l-8 4z" fill="#c8262c" fill-rule="evenodd"/>',
  '<path d="M4 1h15l7 7v21H4z" fill="#fafafa"/><path d="M19 1v7h7z" fill="#aaa"/>',
  '<defs><linearGradient id="p" x2="1" y2="1"><stop stop-color="#21d789"/><stop offset=".5" stop-color="#c8e832"/><stop offset="1" stop-color="#fcf84a"/></linearGradient></defs><path d="M2 2h26v26H2z" fill="url(#p)"/><path d="M5 5h20v20H5z" fill="#000"/>' + txt(13.5, 15, 9.5, '#fff', 'PC', 'font-weight="700"') + '<path d="M8 21h7" stroke="#fff" stroke-width="1.500"/>',
  '<path d="M4 3h22v25H4z" fill="#5cc3e0"/><path d="M4 26h22v3H4z" fill="#f5f5f5"/><path d="M4 29h22" stroke="#b5632a" stroke-width="1.500"/><path d="M8 9h14M8 14h14M8 19h14" stroke="#136a8a" stroke-width="2"/><path d="M7 0v4M12 0v4M17 0v4M22 0v4" stroke="#136a8a" stroke-width="2"/>',
  '<path d="M0 5l10-2v24l-8 2z" fill="#ff7a18"/><path d="M8 1h18c3 0 4 2 4 5v12L10 22z" fill="#087cfa"/><path d="M1 12l8 10h12l-4 8H5z" fill="#fe2857"/><path d="M17 28h10l2-10z" fill="#fc801d"/><path d="M5 5h20v20H5z" fill="#000"/>' + txt(12, 15.5, 9.5, '#fff', 'IJ', `font-weight="700" font-family="Liberation Mono"`) + '<path d="M8 21h8" stroke="#fff" stroke-width="1.500"/>',
  '<circle cx="15" cy="15" r="15" fill="#75aadb"/>' + txt(15, 22, 20, '#fff', 'R', 'font-family="Liberation Serif"'),
  '<rect x="3" y="3" width="24" height="24" rx="5" fill="#000"/><path d="M15 6l7 4v9l-7 5-7-5v-9z" fill="#999"/><path d="M8 10h14l-7 14v-9z" fill="#eee"/>',
  '<path d="M18 0h9c1 0 1 1 1 2v28H12V10z" fill="#d99a12"/><path d="M9 8h9c1 0 1 1 1 2v20H7z" fill="#f2c234"/><path d="M3 15h9c1 0 1 1 1 2v13H2V16z" fill="#fbd95a"/>',
  '<path d="M1 1h27v27H1z" fill="#4a4f55"/><path d="M1 1h27v4H1z" fill="#2a7cc7"/><path d="M4 9h10M4 13h6M4 17h8" stroke="#4fb05c" stroke-width="1.500"/><path d="M16 11c3-2 8-1 8 2v6h-8c-3 0-3 3-3 5-4-2-4-8 0-9h7v-1h-5z" fill="#3b78ad"/><path d="M25 14c6 2 5 10 1 10h-5v2h4c0 5-9 5-9 1v-6h8c1-1 1-4 1-7z" fill="#ffd94f"/>',
  '<path d="M22 0l7 3v24l-7 3L0 11l4-3 18 14V8L4 22l-4-3z" fill="#1f8ad6"/><path d="M22 0l7 3v24l-7 3z" fill="#2fa3f0"/>',
  '<circle cx="15" cy="15" r="14.500" fill="#fff"/><path d="M12.500 6.500v6M5.500 12.500h6" stroke="#36c5f0" stroke-width="3.600" stroke-linecap="round"/><path d="M17.500 6.500v6M23.500 12.500h.5" stroke="#2eb67d" stroke-width="3.600" stroke-linecap="round"/><path d="M17.500 17.500h7M17.500 23h.3" stroke="#ecb22e" stroke-width="3.600" stroke-linecap="round"/><path d="M12.500 17.500v6M6 17.500h.5" stroke="#e01e5a" stroke-width="3.600" stroke-linecap="round"/>',
  '<path d="M7 1h23v27H7z" fill="#21a366"/><path d="M18 1h12v7H18z" fill="#33c481"/><path d="M7 8h12v7H7z" fill="#107c41"/><path d="M7 15h12v13H7zM19 21h11v7H19z" fill="#185c37"/><path d="M19 15h11v6H19z" fill="#107c41"/><rect y="8" width="15" height="14" rx="1" fill="#107c41"/>' + txt(7.5, 19.5, 12, '#fff', 'X', 'font-weight="700"') + '<rect x="11" y="35" width="8" height="4" rx="2" fill="#999"/>'
];
document.getElementById('apps').innerHTML = apps.map((a, i) => `<div class="w-[55px] h-[60px] flex items-center justify-center">${i === 16
  ? `<div class="w-[49px] h-[50px] rounded-[5px] bg-[#2d2d2d] border border-[#383838] flex flex-col items-center">${svg('mt-[9px] w-[28px] h-[30px]', 30, 30, a)}<i class="mt-[5px] w-[19px] h-[4px] rounded-full bg-[#4cc2ff]"></i></div>`
  : svg('w-[30px] h-[30px] overflow-visible', 30, 30, a)}</div>`).join('');

function fit() {
  document.querySelectorAll('[data-w]').forEach(e => {
    e.style.display = 'inline-block';
    e.style.flexShrink = 0;
    e.style.letterSpacing = '0px';
    const r = document.createRange();
    r.selectNodeContents(e);
    const squeeze = +(e.dataset.squeeze || 1);
    e.style.letterSpacing = ((+e.dataset.w - r.getBoundingClientRect().width) / squeeze / e.textContent.length) + 'px';
  });
}
fit();
addEventListener('load', () => { fit(); requestAnimationFrame(fit); setTimeout(fit, 60); });
document.fonts.ready.then(fit);
</script>
</body>
</html>
